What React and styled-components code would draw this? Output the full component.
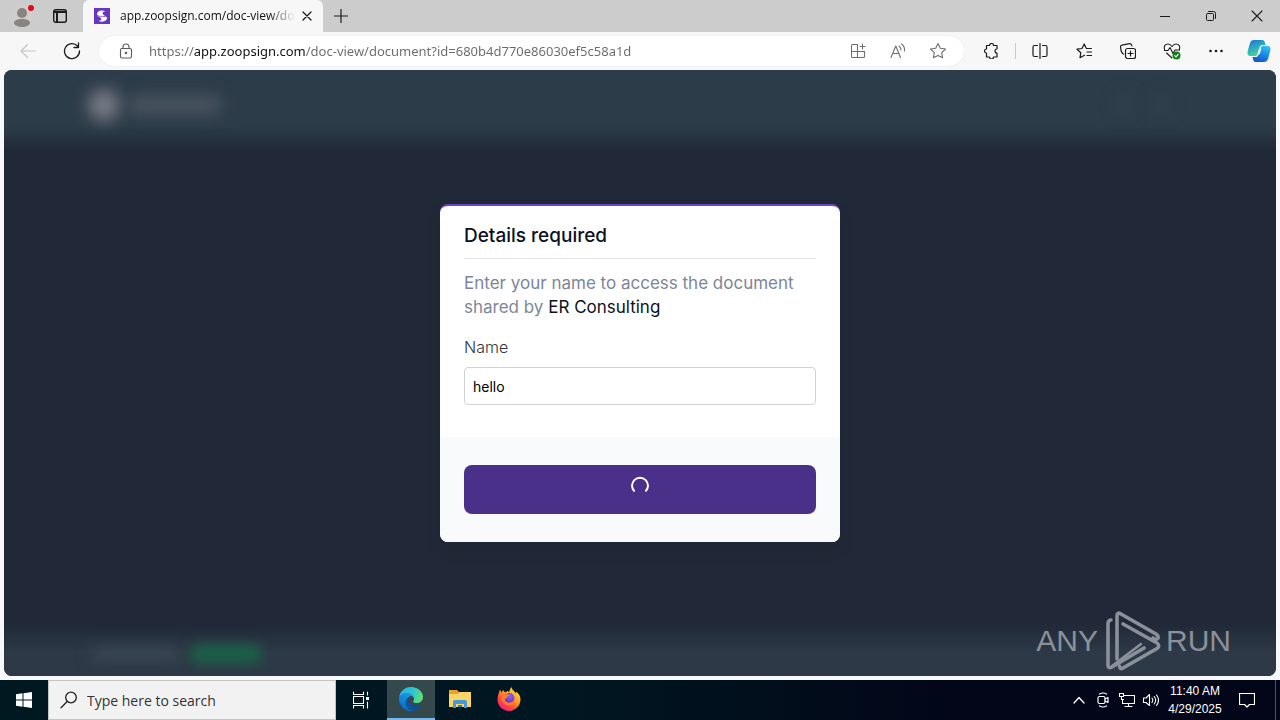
import React from "react";
import styled, { createGlobalStyle } from "styled-components";

const ui = '"Open Sans", "Noto Sans", sans-serif';
const brand = 'Inter, "Open Sans", sans-serif';

const GlobalStyle = createGlobalStyle`
  *, *::before, *::after { box-sizing: border-box; }
  body { margin: 0; font-family: ${ui}; background: #f7f8fa; }
  button, input { font: inherit; margin: 0; }
`;

const Screen = styled.div`
  display: flex;
  flex-direction: column;
  min-height: 100vh;
`;

const IconButton = styled.button`
  display: flex;
  flex: none;
  align-items: center;
  justify-content: center;
  width: ${(p) => p.$width || 44}px;
  height: ${(p) => p.$height || 32}px;
  padding: 0;
  border: 0;
  background: transparent;
  color: ${(p) => p.$color || "#1b1b1b"};
`;

const Glyph = styled.svg`
  display: block;
  flex: none;
  fill: none;
  stroke: currentColor;
  stroke-width: 1.1;
  stroke-linecap: round;
  stroke-linejoin: round;
`;

/* Browser window */

const TabStrip = styled.header`
  display: flex;
  height: 32px;
  background: #cccccc;
`;

const Tab = styled.div`
  display: flex;
  align-items: center;
  width: 240px;
  height: 32px;
  margin-left: 7px;
  padding: 0 4px 0 11px;
  background: #f7f7f7;
  border-radius: 6px 6px 0 0;
`;

const TabTitle = styled.span`
  flex: 1;
  margin-left: 10px;
  overflow: hidden;
  white-space: nowrap;
  font-size: 12px;
  line-height: 16px;
  color: #111;
  mask-image: linear-gradient(to right, #000 85%, transparent);
`;

const WindowControls = styled.div`
  display: flex;
  margin-left: auto;
`;

const Toolbar = styled.nav`
  display: flex;
  align-items: center;
  height: 38px;
  padding-left: 6px;
  background: #f7f7f7;
`;

const AddressBar = styled.div`
  display: flex;
  flex: 1;
  align-items: center;
  height: 30px;
  margin: 0 3px 0 5px;
  padding: 0 6px 0 8px;
  border-radius: 15px;
  background: #fff;
  box-shadow: 0 0 1px #d8d8d8;
`;

const AddressInput = styled.input`
  flex: 1;
  min-width: 0;
  height: 24px;
  margin-left: 4px;
  padding: 0;
  border: 0;
  outline: 0;
  font-family: "Noto Sans", "Open Sans", sans-serif;
  font-size: 13px;
  color: transparent;
  background: linear-gradient(to right, #6a6a6a 45px, #111 45px, #111 156px, #6a6a6a 156px);
  background-clip: text;
`;

const Divider = styled.span`
  width: 1px;
  height: 16px;
  margin-right: 2px;
  background: #c9c9c9;
`;

/* Web page */

const Viewport = styled.main`
  position: relative;
  display: grid;
  flex: 1;
  margin: 0 4px 4px;
  overflow: hidden;
  border-radius: 8px;
  background: #212938;
`;

const Backdrop = styled.div`
  display: flex;
  flex-direction: column;
  justify-content: space-between;
  grid-area: 1 / 1;
`;

const SiteHeader = styled.div`
  display: flex;
  align-items: center;
  justify-content: space-between;
  height: 80px;
  padding: 0 108px 10px 84px;
  background: linear-gradient(#2d3c49 56px, #212938 80px);
`;

const SiteFooter = styled.div`
  display: flex;
  align-items: flex-end;
  height: 52px;
  padding: 0 88px 12px;
  background: linear-gradient(#212938, #2d3947 28px);
`;

const Cluster = styled.div`
  display: flex;
  align-items: center;
  gap: ${(p) => p.$gap || 0}px;
`;

const Smudge = styled.span`
  width: ${(p) => p.$width}px;
  height: ${(p) => p.$height}px;
  border-radius: ${(p) => p.$radius || 8}px;
  background: ${(p) => p.$color};
  filter: blur(${(p) => p.$blur || 8}px);
`;

const Dialog = styled.form`
  grid-area: 1 / 1;
  place-self: center;
  width: 100%;
  max-width: 400px;
  overflow: hidden;
  border-top: 2px solid #6b46c1;
  border-radius: 8px;
  background: #fff;
  box-shadow: 0 8px 16px rgba(0, 0, 0, 0.08);
  font-family: ${brand};
  z-index: 1;
`;

const DialogBody = styled.div`
  padding: 16px 24px 32px;
`;

const Title = styled.h1`
  margin: 0 0 12px;
  padding-bottom: 8px;
  border-bottom: 1px solid #e2e4e8;
  font-size: 19px;
  font-weight: 500;
  line-height: 28px;
  color: #0d1120;
`;

const Intro = styled.p`
  margin: 0 0 16px;
  font-size: 17px;
  line-height: 24px;
  color: #7c8698;
`;

const Company = styled.span`
  color: #0d1120;
`;

const FieldLabel = styled.label`
  display: block;
  margin-bottom: 8px;
  font-size: 16px;
  font-weight: 300;
  line-height: 24px;
  color: #2d3748;
`;

const TextField = styled.input`
  display: block;
  width: 100%;
  height: 38px;
  padding: 0 8px;
  border: 1px solid #cfd2d6;
  border-radius: 4px;
  outline: 0;
  font-size: 14px;
  color: #000;
`;

const DialogFooter = styled.div`
  padding: 28px 24px;
  background: #f8fafc;
`;

const SubmitButton = styled.button`
  display: flex;
  align-items: flex-start;
  justify-content: center;
  width: 100%;
  height: 49px;
  padding: 10px 0 0;
  border: 0;
  border-radius: 8px;
  background: #4a3088;
  color: #fff;
`;

const Watermark = styled.div`
  position: absolute;
  right: 45px;
  bottom: 4px;
  display: flex;
  align-items: center;
  gap: 5px;
  font-family: "Liberation Sans Narrow", "Liberation Sans", sans-serif;
  font-size: 30px;
  line-height: 62px;
  color: #8b919b;
`;

/* Desktop taskbar */

const Taskbar = styled.footer`
  display: flex;
  align-items: center;
  height: 40px;
  background: linear-gradient(to right, #001820, #001620 45%, #020618 75%);
  color: #fff;
`;

const SearchBox = styled.label`
  display: flex;
  align-items: center;
  width: 288px;
  height: 40px;
  padding-left: 11px;
  border: 1px solid #c4c4c4;
  background: #f2f2f2;
  color: #222;
`;

const SearchInput = styled.input`
  flex: 1;
  min-width: 0;
  margin-left: 9px;
  padding: 0;
  border: 0;
  outline: 0;
  background: transparent;
  font-size: 14px;
  &::placeholder { color: #333; opacity: 1; }
`;

const AppButton = styled(IconButton)`
  border-bottom: 2px solid ${(p) => (p.$active ? "#76b9ed" : "transparent")};
  background: ${(p) => (p.$active ? "#35484c" : "transparent")};
`;

const Tray = styled.div`
  display: flex;
  align-items: center;
  margin-left: auto;
`;

const Clock = styled.time`
  width: 64px;
  text-align: center;
  white-space: nowrap;
  font-size: 12px;
  font-family: "Liberation Sans", sans-serif;
  line-height: 18px;
`;

const ShowDesktop = styled.button`
  width: 5px;
  height: 40px;
  margin-left: 8px;
  padding: 0;
  border: 0;
  border-left: 1px solid #4d5360;
  background: transparent;
`;

function Icon({ size = 18, children, ...rest }) {
  return (
    <Glyph width={size} height={size} viewBox={`0 0 ${size} ${size}`} aria-hidden="true" {...rest}>
      {children}
    </Glyph>
  );
}

const star = "M9 1.5l2.3 4.7 5.2.8-3.8 3.6.9 5.2L9 13.4l-4.6 2.4.9-5.2L1.5 7l5.2-.8z";

const Profile = () => (
  <Icon size={30}>
    <circle cx="15" cy="16" r="11" fill="#d0cecb" stroke="none" />
    <circle cx="15" cy="12" r="5" fill="#878481" stroke="none" />
    <path d="M7 22c0-3 4-4 8-4s8 1 8 4c0 2-4 4-8 4s-8-2-8-4z" fill="#878481" stroke="none" />
    <circle cx="24" cy="7" r="3" fill="#e00b1c" stroke="none" />
  </Icon>
);

const Favicon = () => (
  <Icon size={16}>
    <rect width="16" height="16" fill="#6a36c0" stroke="none" />
    <path d="M3 6.500C3 4 5 2.500 8 2.500c1.300 0 2.400.3 3.300.9C9 3.300 8 4.600 9 6.200c.8 1.300 2.600 1.900 3.800 2.200-2 .8-4.200.7-6 .1C5 8 3.700 7.500 3 6.500z" fill="#fff" stroke="none" />
    <path d="M13.200 9.800c-.2 2.300-2.200 3.900-5.200 3.900-1.300 0-2.500-.3-3.400-.9 2.400.1 3.300-1 2.400-2.500C6.300 9.200 4.500 8.600 3.200 8.300c2-.8 4.300-.6 6.100 0 1.700.4 3.200.9 3.900 1.500z" fill="#fff" stroke="none" />
    <path d="M4.500 8.200q3.500.2 7 .3" stroke="#6a36c0" strokeWidth=".7" />
  </Icon>
);

const Copilot = () => (
  <Icon size={24}>
    <defs>
      <linearGradient id="cpA" x1="0" y1="0" x2=".4" y2="1">
        <stop offset="0" stopColor="#1b6fd8" />
        <stop offset=".5" stopColor="#28a9c4" />
        <stop offset="1" stopColor="#4fd08c" />
      </linearGradient>
      <linearGradient id="cpB" x1=".7" y1="0" x2=".3" y2="1">
        <stop offset="0" stopColor="#2fc0f2" />
        <stop offset=".5" stopColor="#1c86e6" />
        <stop offset="1" stopColor="#1455c8" />
      </linearGradient>
    </defs>
    <path d="M7 1h8c1.500 0 2.300.8 2.800 2.300L18.500 6h-3c-1.600 0-2.500 1-3 2.600l-2 6.400c-.5 1.500-1.500 2-3 2H3.500C1 17 0 15 .6 12.500L3 4c.7-2 2-3 4-3z" fill="url(#cpA)" stroke="none" />
    <path d="M17 23H9c-1.500 0-2.300-.8-2.800-2.300L5.500 18h3c1.600 0 2.500-1 3-2.600l2-6.400c.5-1.500 1.500-2 3-2h4c2.500 0 3.500 2 2.900 4.500L21 20c-.7 2-2 3-4 3z" fill="url(#cpB)" stroke="none" />
    <path d="M13.200 9.500h1.300l-1.700 5.200c-.2.600-.5.800-1 .8h-1.300L12.200 10.300c.2-.6.500-.8 1-.8z" fill="#eaf8ff" stroke="none" />
  </Icon>
);

const EdgeLogo = () => (
  <Glyph width="24" height="24" viewBox="0 0 256 256" aria-hidden="true">
    <defs>
      <linearGradient id="edA" x1="0" y1="0" x2="1" y2="0">
        <stop offset="0" stopColor="#0c59a4" />
        <stop offset="1" stopColor="#114a8b" />
      </linearGradient>
      <linearGradient id="edB" x1=".8" y1="0" x2=".3" y2="1">
        <stop offset="0" stopColor="#1b9de2" />
        <stop offset=".6" stopColor="#0f85d8" />
        <stop offset="1" stopColor="#0868bd" />
      </linearGradient>
      <linearGradient id="edC" x1="0" y1=".3" x2="1" y2=".6">
        <stop offset="0" stopColor="#2fb6e9" />
        <stop offset=".5" stopColor="#2bc3d2" />
        <stop offset="1" stopColor="#62e070" />
      </linearGradient>
    </defs>
    <g transform="translate(-4.630 -4.920)" stroke="none">
      <path fill="url(#edA)" d="M235.680,195.460a93.730,93.730,0,0,1-10.540,4.710,101.870,101.870,0,0,1-35.900,6.460c-47.320,0-88.540-32.550-88.540-74.320A31.480,31.480,0,0,1,117.130,105c-42.800,1.800-53.800,46.400-53.800,72.530,0,73.880,68.090,81.370,82.760,81.370,7.910,0,19.840-2.300,27-4.560l1.310-.44A128.340,128.340,0,0,0,241,201.100,4,4,0,0,0,235.680,195.460Z" />
      <path fill="url(#edB)" d="M110.340,246.340A79.200,79.200,0,0,1,87.600,225a80.720,80.720,0,0,1,29.530-120c3.120-1.470,8.450-4.130,15.540-4a32.350,32.350,0,0,1,25.690,13,31.880,31.880,0,0,1,6.360,18.660c0-.21,24.460-79.600-80-79.600-43.900,0-80,41.660-80,78.210a130.150,130.150,0,0,0,12.110,56,128,128,0,0,0,156.380,67.110,75.550,75.550,0,0,1-62.780-8Z" />
      <path fill="url(#edC)" d="M156.940,153.780c-.81,1.050-3.300,2.500-3.300,5.660,0,2.610,1.700,5.120,4.720,7.230,14.380,10,41.490,8.680,41.560,8.680a59.560,59.560,0,0,0,30.270-8.350A61.380,61.380,0,0,0,260.630,114c.26-22.410-8-37.310-11.340-43.910C228.090,28.760,182.350,5,132.610,5a128,128,0,0,0-128,126.200c.48-36.540,36.800-66.050,80-66.050,3.500,0,23.460.34,42,10.070,16.340,8.580,24.900,18.940,30.850,29.210,6.180,10.670,7.280,24.150,7.280,29.520S162,147.200,156.940,153.780Z" />
    </g>
  </Glyph>
);

const Explorer = () => (
  <Icon size={22}>
    <path d="M0 2h8l2 2h12v15H0z" fill="#e9a22b" stroke="none" />
    <path d="M0 6h9l2-2h11v15H0z" fill="#fcd466" stroke="none" />
    <path d="M4 20v-6q0-2 2-2h10q2 0 2 2v6h-3v-4H7v4z" fill="#3f9bdc" stroke="none" />
    <path d="M9 17h4v2H9z" fill="#2e7cc0" stroke="none" />
  </Icon>
);

const Firefox = () => (
  <Icon size={24}>
    <defs>
      <linearGradient id="ffA" x1=".85" y1=".1" x2=".25" y2=".95">
        <stop offset="0" stopColor="#ffe14a" />
        <stop offset=".4" stopColor="#ff9a22" />
        <stop offset=".7" stopColor="#ff4a3c" />
        <stop offset="1" stopColor="#f0207e" />
      </linearGradient>
      <radialGradient id="ffB" cx=".6" cy=".3" r=".8">
        <stop offset="0" stopColor="#9a5cf0" />
        <stop offset="1" stopColor="#5a36b8" />
      </radialGradient>
    </defs>
    <path d="M14.500 0c.3 2 1.300 3 2.700 4.300.9.900 1.500 1.600 1.900 2.300.2-.8.100-1.500-.1-2.100 3.200 2 4.500 5 4.500 8.100C23.500 19 18.300 24 12 24S.5 19 .5 12.800C.5 9 1.800 6.200 3 2.500c.8 1 1 2 1.500 3 .7-1 1.500-2 2-2.500.3 1 1.200 2 2 2.600C9 4.600 10 4 11.200 4c0 .6.300 1 .8 1.400C12.500 3.500 13.200 1.500 14.500 0z" fill="url(#ffA)" stroke="none" />
    <circle cx="12.500" cy="11" r="5" fill="url(#ffB)" stroke="none" />
    <path d="M4 7.500c2-1.500 4-1.200 5.200-.2 1.500-.5 3 .2 3.800 1.200-1 .2-2.300.9-2.800 1.700-.4 1.200-1.500 1.500-2.700 1.900.5 2.600 3 4.200 5.500 3.600 1.500-.4 2-1.400 3.300-1.300.6.100.9.700.5 1.400-1.800 3-6.300 3.500-9.300 1.200C4.600 14.800 3.500 11 4 7.500z" fill="#ff7a2c" stroke="none" />
  </Icon>
);

const PlayMark = () => (
  <Glyph width="58" height="62" viewBox="0 0 58 62" aria-hidden="true">
    <g strokeWidth="3.600">
      <path d="M8 10Q5 10 5 14V55Q5 59 9 57L41 38" />
      <path d="M14 49V6Q14 1.500 18 4L53 24Q57 27 54 29 52 30 50 28" />
      <path d="M20 14L54 33Q57.500 36 54 38.500L20 58Q17 60 16.500 56" />
      <path d="M9 56L38 34" strokeWidth="2.500" />
    </g>
  </Glyph>
);

export default function App() {
  return (
    <Screen>
      <GlobalStyle />
      <TabStrip>
        <Cluster>
          <IconButton aria-label="Profile"><Profile /></IconButton>
          <IconButton $width={32} aria-label="Tab actions">
            <Icon size={14}>
              <rect x=".7" y=".7" width="12.600" height="12.600" rx="2" strokeWidth="1.400" />
              <path d="M1 3h12M4 3v10" strokeWidth="2" strokeLinecap="butt" />
            </Icon>
          </IconButton>
        </Cluster>
        <Cluster>
          <Tab>
            <Favicon />
            <TabTitle>app.zoopsign.com/doc-view/do</TabTitle>
            <IconButton $width={24} aria-label="Close tab">
              <Icon size={10}><path d="M1 1l8 8M9 1L1 9" strokeWidth="1.300" /></Icon>
            </IconButton>
          </Tab>
          <IconButton $width={36} aria-label="New tab">
            <Icon size={14}><path d="M7 .5v13M.5 7h13" strokeWidth="1.200" /></Icon>
          </IconButton>
        </Cluster>
        <WindowControls>
          <IconButton $width={46} aria-label="Minimize">
            <Icon size={10}><path d="M0 5.500h10" strokeWidth="1" /></Icon>
          </IconButton>
          <IconButton $width={46} aria-label="Restore">
            <Icon size={12}>
              <rect x="1.500" y="3.500" width="7" height="7" rx="1" strokeWidth="1" />
              <path d="M3.500 1.500h5q2 0 2 2v5" strokeWidth="1" />
            </Icon>
          </IconButton>
          <IconButton $width={46} aria-label="Close window">
            <Icon size={12}><path d="M1 1l10 10M11 1L1 11" /></Icon>
          </IconButton>
        </WindowControls>
      </TabStrip>

      <Toolbar>
        <IconButton $color="#c4c4c4" aria-label="Back">
          <Icon size={16}><path d="M15.500 8H1M7.500 1.500L1 8l6.500 6.500" /></Icon>
        </IconButton>
        <IconButton aria-label="Refresh">
          <Icon size={18}>
            <path d="M16.500 9A7.500 7.500 0 1 1 14.500 4M15.500 1v4.500H11" strokeWidth="1.300" />
          </Icon>
        </IconButton>
        <AddressBar>
          <IconButton $width={38} $height={28} $color="#5c5c5c" aria-label="Site information">
            <Icon size={16}>
              <rect x="2.500" y="5.500" width="11" height="9.500" rx="1.500" />
              <path d="M5 5.500V4a3 3 0 0 1 6 0v1.500" />
              <circle cx="8" cy="10" r=".7" fill="currentColor" />
            </Icon>
          </IconButton>
          <AddressInput
            aria-label="Address"
            defaultValue="https://app.zoopsign.com/doc-view/document?id=680b4d770e86030ef5c58a1d"
          />
          <IconButton $width={40} $height={28} $color="#6e6e6e" aria-label="Install app">
            <Icon size={16}>
              <path d="M7.500 1.500h-5a1 1 0 0 0-1 1v11a1 1 0 0 0 1 1h11a1 1 0 0 0 1-1v-5h-13M7.500 1.500v13M12.500 1v5M10 3.500h5" />
            </Icon>
          </IconButton>
          <IconButton $width={40} $height={28} $color="#6e6e6e" aria-label="Read aloud">
            <Icon size={16}>
              <path d="M1 14.500L5.800 3 10.500 14.500M2.700 10.500h6.200M9 3q2 1.500 2 4M11.500 1q3.500 2.500 3 7" />
            </Icon>
          </IconButton>
          <IconButton $width={40} $height={28} $color="#6e6e6e" aria-label="Add to favorites">
            <Icon><path d={star} /></Icon>
          </IconButton>
        </AddressBar>
        <IconButton $width={48} aria-label="Extensions">
          <Icon size={16}>
            <path d="M3.500 2.500h3a2 2 0 0 1 4 0h3.500v3.500a2 2 0 0 0 0 4V14h-3.500a2 2 0 0 1-4 0h-3v-4a2 2 0 0 1 0-4z" strokeWidth="1.200" />
          </Icon>
        </IconButton>
        <Divider />
        <IconButton aria-label="Split screen">
          <Icon size={16}><path d="M5.500 2.500h-3a1.500 1.500 0 0 0-1.500 1.500v8a1.500 1.500 0 0 0 1.500 1.500h3M10.500 2.500h3a1.500 1.500 0 0 1 1.500 1.500v8a1.500 1.500 0 0 1-1.500 1.500h-3M8 .5v15" strokeWidth="1.200" /></Icon>
        </IconButton>
        <IconButton aria-label="Favorites">
          <Icon size={16}><path d="M8.500 12.200L4 14.700l.8-4.900L1 6.200l5-.7 2.200-4.500 2.200 4.500h5M11 9h4.500M11 12.500h4.500" strokeWidth="1.200" /></Icon>
        </IconButton>
        <IconButton aria-label="Collections">
          <Icon size={16}>
            <rect x="5.500" y="5.500" width="10" height="10" rx="2" strokeWidth="1.200" />
            <path d="M10.500 8v5M8 10.500h5M3.500 11C1.500 10 1 8 .8 6L.5 4.200Q.3 2.500 2 2.200l7.500-1.500Q11.500.5 12 3" strokeWidth="1.200" />
          </Icon>
        </IconButton>
        <IconButton aria-label="Browser essentials">
          <Icon size={18}>
            <path d="M1.500 7.500C.5 4 2.500 2 5 2c2 0 3 1.200 4 2.500C10 3.200 11 2 13 2c2.500 0 4.500 2 3.500 5.500M3.500 11L9 16M1.500 8.500H5L7 5.500l3 6 2-3.500h4.500" />
            <circle cx="13.500" cy="13.500" r="4" fill="#16801c" stroke="none" />
            <path d="M11.800 13.700l1.200 1.200 2.200-2.500" stroke="#fff" />
          </Icon>
        </IconButton>
        <IconButton aria-label="Settings and more">
          <Icon size={16}>
            <g fill="currentColor" stroke="none">
              <circle cx="2.500" cy="8" r="1.300" /><circle cx="8" cy="8" r="1.300" /><circle cx="13.500" cy="8" r="1.300" />
            </g>
          </Icon>
        </IconButton>
        <IconButton $width={42} aria-label="Copilot"><Copilot /></IconButton>
      </Toolbar>

      <Viewport>
        <Backdrop>
          <SiteHeader>
            <Cluster $gap={8}>
              <Smudge $width={32} $height={32} $radius={16} $color="#777b85" />
              <Smudge $width={94} $height={18} $color="#4c5562" />
            </Cluster>
            <Cluster $gap={22}>
              <Smudge $width={14} $height={20} $color="#33424f" />
              <Smudge $width={14} $height={20} $color="#33424f" />
            </Cluster>
          </SiteHeader>
          <SiteFooter>
            <Cluster $gap={10}>
              <Smudge $width={88} $height={10} $color="#434c5a" />
              <Smudge $width={72} $height={20} $color="#1c5f48" $blur={6} />
            </Cluster>
          </SiteFooter>
        </Backdrop>

        <Dialog onSubmit={(e) => e.preventDefault()}>
          <DialogBody>
            <Title>Details required</Title>
            <Intro>
              Enter your name to access the document shared by <Company>ER Consulting</Company>
            </Intro>
            <FieldLabel htmlFor="name">Name</FieldLabel>
            <TextField id="name" type="text" defaultValue="hello" />
          </DialogBody>
          <DialogFooter>
            <SubmitButton type="submit" aria-label="Submitting">
              <Icon size={20}>
                <path d="M4.500 16.500A8 8 0 1 1 15.500 16.500" strokeWidth="2" strokeLinecap="butt" />
              </Icon>
            </SubmitButton>
          </DialogFooter>
        </Dialog>

        <Watermark>
          <span>ANY</span>
          <PlayMark />
          <span>RUN</span>
        </Watermark>
      </Viewport>

      <Taskbar>
        <IconButton $width={48} $height={40} $color="#fff" aria-label="Start">
          <Icon size={16}>
            <path d="M0 2.200L6.500 1.300V7.500H0zM7.500 1.200L16 0v7.500H7.500zM0 8.500h6.500v6.200L0 13.800zM7.500 8.500H16V16l-8.500-1.200z" fill="#fff" stroke="none" />
          </Icon>
        </IconButton>
        <SearchBox>
          <Icon size={18}>
            <circle cx="11" cy="6.500" r="5.300" strokeWidth="1.300" />
            <path d="M7.200 10.500L1 16.800" strokeWidth="1.300" />
          </Icon>
          <SearchInput type="text" aria-label="Search" placeholder="Type here to search" />
        </SearchBox>
        <IconButton $width={51} $height={40} $color="#fff" aria-label="Task view">
          <Icon size={18}>
            <path d="M.5 1v2.500h10V1M.5 17v-2.500h10V17M.5 5.500h10v7H.5zM14.500 1v3M14.500 11v6" />
            <path d="M13 6h3v3h-3z" fill="#fff" stroke="none" />
          </Icon>
        </IconButton>
        <AppButton $active $width={48} $height={40} aria-label="Microsoft Edge"><EdgeLogo /></AppButton>
        <AppButton $width={49} $height={40} aria-label="File Explorer"><Explorer /></AppButton>
        <AppButton $width={49} $height={40} aria-label="Firefox"><Firefox /></AppButton>
        <Tray>
          <IconButton $width={24} $color="#fff" aria-label="Show hidden icons">
            <Icon size={12}><path d="M1 9l5-5.500L11 9" strokeWidth="1.300" /></Icon>
          </IconButton>
          <IconButton $width={24} $color="#fff" aria-label="Meet now">
            <Icon size={16}>
              <rect x="3" y="4.500" width="7" height="7" rx="1.500" strokeWidth="1.200" />
              <path d="M10 7l3-1.500v5L10 9M4.500 2q3.500-2 7 0M4.500 14q3.500 2 7 0" strokeWidth="1.200" />
            </Icon>
          </IconButton>
          <IconButton $width={24} $color="#fff" aria-label="Network">
            <Icon size={16}>
              <path d="M5.500 3.500h10v8h-12v-4M9.500 11.500v3M6 14.500h7M.5 1.500h4v3h-4zM2.500 4.500v3h2" />
            </Icon>
          </IconButton>
          <IconButton $width={24} $color="#fff" aria-label="Volume">
            <Icon size={16}>
              <path d="M.5 6v4.500H3l3.500 3v-11L3 6zM9 6q1.500 2 0 4.500M11.200 4.500q3 3.700 0 7.500M13.500 3q4 5.200 0 10.500" />
            </Icon>
          </IconButton>
          <Clock dateTime="2025-04-29T11:40">11:40 AM<br />4/29/2025</Clock>
          <IconButton $width={40} $color="#fff" aria-label="Notifications">
            <Icon size={16}><path d="M.5 1.500h15v11h-5L8 15l-2.500-2.500h-5z" strokeWidth="1.200" /></Icon>
          </IconButton>
          <ShowDesktop aria-label="Show desktop" />
        </Tray>
      </Taskbar>
    </Screen>
  );
}
